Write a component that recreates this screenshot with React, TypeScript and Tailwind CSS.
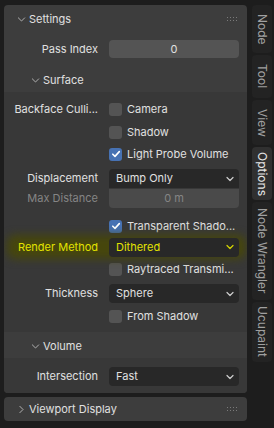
import React from 'react';

function Chevron({ open, className }: { open: boolean; className?: string }) {
  return (
    <svg className={className} width="9" height="9" viewBox="0 0 10 10" fill="none" stroke="#bdbdbd" strokeWidth={1} strokeLinecap="round" strokeLinejoin="round">
      {open ? <path d="M1.5 3.2L5 6.7L8.5 3.2" /> : <path d="M3.2 1.5L6.7 5L3.2 8.5" />}
    </svg>
  );
}

function Grip() {
  return (
    <svg width="11" height="5" viewBox="0 0 11 5" fill="#7a7a7a">
      {[0, 3, 6, 9].map((x) => (
        <React.Fragment key={x}>
          <rect x={x} y={0} width="1" height="1" />
          <rect x={x} y={3} width="1" height="1" />
        </React.Fragment>
      ))}
    </svg>
  );
}

function DropArrow({ color = '#cfcfcf' }: { color?: string }) {
  return (
    <svg width="8" height="6" viewBox="0 0 8 6" fill="none" stroke={color} strokeWidth={1.2} strokeLinecap="round" strokeLinejoin="round">
      <path d="M1 1.5L4 4.5L7 1.5" />
    </svg>
  );
}

function Check({ checked, label }: { checked: boolean; label: string }) {
  return (
    <div className="flex items-center gap-[5px]">
      {checked ? (
        <div className="w-[13px] h-[13px] rounded-[3px] bg-[#4772b3] flex items-center justify-center">
          <svg width="10" height="10" viewBox="0 0 10 10" fill="none" stroke="#ffffff" strokeWidth={1.6} strokeLinecap="round" strokeLinejoin="round">
            <path d="M1.8 5.2L4 7.4L8.3 2.6" />
          </svg>
        </div>
      ) : (
        <div className="w-[13px] h-[13px] rounded-[3px] bg-[#545454]" />
      )}
      <span className="text-[#e0e0e0] whitespace-nowrap">{label}</span>
    </div>
  );
}

function Row({ label, muted, h, mt, children }: { label?: string; muted?: boolean; h: number; mt?: string; children: React.ReactNode }) {
  return (
    <div className={`flex items-center ${mt ?? ''}`} style={{ height: h }}>
      <div className={`w-[105px] pr-[11px] text-right whitespace-nowrap ${muted ? 'text-[#858585]' : 'text-[#e0e0e0]'}`}>{label}</div>
      <div className="w-[130px]">{children}</div>
    </div>
  );
}

function Dropdown({ value, color = 'text-[#e0e0e0]', round = 'rounded-[4px]' }: { value: string; color?: string; round?: string }) {
  return (
    <div className={`h-[19px] bg-[#282828] ${round} flex items-center justify-between pl-[7px] pr-[5px]`}>
      <span className={color}>{value}</span>
      <DropArrow color={color === 'text-[#e0e0e0]' ? '#cfcfcf' : '#d6d600'} />
    </div>
  );
}

function SubHeader({ title }: { title: string }) {
  return (
    <div className="h-[24px] flex items-center bg-[#3d3d3d] pl-[27px] gap-[3px]">
      <Chevron open />
      <span className="text-[#e0e0e0]">{title}</span>
    </div>
  );
}

const tabs = [
  { name: 'Node', h: 48, active: false },
  { name: 'Tool', h: 43, active: false },
  { name: 'View', h: 45, active: false },
  { name: 'Options', h: 53, active: true },
  { name: 'Node Wrangler', h: 98, active: false },
  { name: 'Ucupaint', h: 60, active: false },
];

export default function App() {
  return (
    <div className="w-[274px] h-[428px] bg-[#1d1d1d] flex overflow-hidden text-[11px] leading-none" style={{ fontFamily: 'Inter, "DejaVu Sans", sans-serif' }}>
      {/* Panels */}
      <div className="pl-[4px] pt-[5px] w-[247px] flex flex-col gap-[4px]">
        <div className="rounded-[4px] bg-[#3d3d3d] overflow-hidden">
          {/* Header */}
          <div className="h-[27px] pt-[1px] flex items-center pl-[13px] pr-[9px] gap-[3px]">
            <Chevron open />
            <span className="text-[#e0e0e0] flex-1">Settings</span>
            <Grip />
          </div>
          <Row label="Pass Index" h={22} mt="mt-[6px]">
            <div className="h-[18px] rounded-[4px] bg-[#545454] flex items-center justify-center text-[#e0e0e0]">0</div>
          </Row>
          <div className="h-[8px]" />
          <SubHeader title="Surface" />
          {/* Surface content */}
          <div className="bg-[#383838] pt-[6px] pb-[5px]">
            <Row label="Backface Culli..." h={22}>
              <Check checked={false} label="Camera" />
            </Row>
            <Row h={22} mt="mt-[1px]">
              <Check checked={false} label="Shadow" />
            </Row>
            <Row h={22}>
              <Check checked label="Light Probe Volume" />
            </Row>
            <Row label="Displacement" h={19} mt="mt-[4px]">
              <Dropdown value="Bump Only" round="rounded-t-[4px]" />
            </Row>
            <Row label="Max Distance" muted h={19} mt="mt-[1px]">
              <div className="h-[19px] rounded-b-[4px] bg-[#4a4a4a] flex items-center justify-center text-[#858585]">0 m</div>
            </Row>
            <Row h={22} mt="mt-[7px]">
              <Check checked label="Transparent Shado..." />
            </Row>
            {/* Highlighted row */}
            <div className="relative">
              <div className="absolute left-[3px] right-[1px] -top-[2px] -bottom-[2px] bg-[#46460c] blur-[4px] rounded-[8px]" />
              <div className="relative flex items-center h-[20px]">
                <div className="w-[105px] pr-[11px] text-right whitespace-nowrap text-[#e2e200]">Render Method</div>
                <div className="w-[130px]">
                  <Dropdown value="Dithered" color="text-[#e2e200]" />
                </div>
              </div>
            </div>
            <Row h={22} mt="mt-[1px]">
              <Check checked={false} label="Raytraced Transmi..." />
            </Row>
            <Row label="Thickness" h={19} mt="mt-[4px]">
              <Dropdown value="Sphere" />
            </Row>
            <Row h={22} mt="mt-[2px]">
              <Check checked={false} label="From Shadow" />
            </Row>
          </div>
          <div className="h-[2px]" />
          <SubHeader title="Volume" />
          <div className="bg-[#383838] pt-[9px] pb-[7px]">
            <Row label="Intersection" h={19}>
              <Dropdown value="Fast" />
            </Row>
          </div>
        </div>
        {/* Viewport Display */}
        <div className="h-[24px] rounded-[4px] bg-[#3d3d3d] flex items-center pl-[13px] pr-[9px] gap-[3px]">
          <Chevron open={false} />
          <span className="text-[#e0e0e0] flex-1">Viewport Display</span>
          <Grip />
        </div>
      </div>

      {/* Tab bar */}
      <div className="flex-1 flex flex-col items-end pr-[2px] pt-[5px] gap-[2px]">
        {tabs.map((t) => (
          <div
            key={t.name}
            className={`w-[20px] rounded-[4px] flex items-center justify-center ${t.active ? 'bg-[#303030] text-[#e6e6e6]' : 'bg-[#232323] text-[#a0a0a0]'}`}
            style={{ height: t.h }}
          >
            <span className="whitespace-nowrap text-[12px]" style={{ writingMode: 'vertical-rl' }}>{t.name}</span>
          </div>
        ))}
      </div>
    </div>
  );
}
